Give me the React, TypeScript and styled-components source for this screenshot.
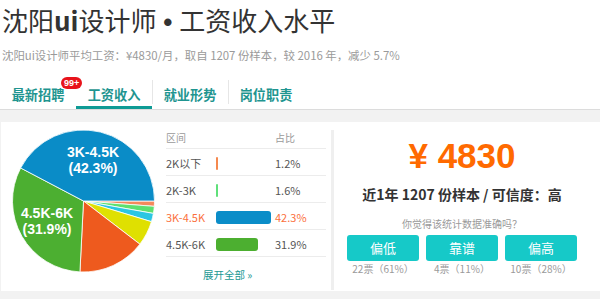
import React from "react";
import styled, { createGlobalStyle } from "styled-components";

const Global = createGlobalStyle`
  html, body { margin: 0; padding: 0; background: #fff; }
  body { font-family: "Noto Sans CJK SC", "Liberation Sans", sans-serif; width: 600px; height: 299px; overflow: hidden; }
  * { box-sizing: border-box; }
`;

const Page = styled.div`
  width: 600px;
  height: 299px;
  display: flex;
  flex-direction: column;
`;

const Header = styled.div`
  padding: 0 0 0 2px;
  height: 72px;
`;

const Title = styled.h1`
  margin: 0;
  height: 40px;
  line-height: 40px;
  font-size: 26px;
  font-weight: 400;
  color: #333;
  white-space: nowrap;
  b { font-weight: 700; }
`;

const Dot = styled.span`
  font-family: "Liberation Sans", sans-serif;
  font-weight: 700;
  padding: 0 1px;
`;

const Sub = styled.div`
  margin-top: 7px;
  font-size: 11.4px;
  line-height: 16px;
  color: #9a9a9a;
  white-space: nowrap;
`;

const Tabs = styled.div`
  display: flex;
  height: 37px;
`;

const Tab = styled.div<{ $active?: boolean; $sep?: boolean }>`
  position: relative;
  width: 76px;
  text-align: center;
  padding-top: 14px;
  line-height: 18px;
  font-size: 13.2px;
  font-weight: 700;
  color: #1f9590;
  border-bottom: 3px solid ${(p) => (p.$active ? "#0e9b95" : "transparent")};
  &::before {
    content: "";
    display: ${(p) => (p.$sep ? "block" : "none")};
    position: absolute;
    left: 0;
    top: 8px;
    height: 24px;
    width: 1px;
    background: #e6e6e6;
  }
`;

const Badge = styled.span`
  position: absolute;
  left: 61px;
  top: 5px;
  height: 12px;
  padding: 0 3px;
  border-radius: 6px;
  background: #e8131b;
  color: #fff;
  font-family: "Liberation Sans", sans-serif;
  font-size: 9px;
  font-weight: 700;
  line-height: 12px;
`;

const Body = styled.div`
  flex: 1;
  background: #f2f2f2;
  border-top: 1px solid #dcdcdc;
  padding: 12px 0 0 1px;
`;

const Card = styled.div`
  background: #fff;
  height: 169px;
  display: flex;
`;

const PieBox = styled.div`
  width: 165px;
  flex: none;
  position: relative;
`;

const PieLabel = styled.div<{ $x: number; $y: number }>`
  position: absolute;
  left: ${(p) => p.$x}px;
  top: ${(p) => p.$y}px;
  transform: translateX(-50%);
  text-align: center;
  color: #fff;
  font-family: "Liberation Sans", sans-serif;
  font-weight: 700;
  font-size: 14px;
  line-height: 16px;
  white-space: nowrap;
`;

const TableBox = styled.div`
  width: 160px;
  flex: none;
  padding-top: 4px;
  display: flex;
  flex-direction: column;
`;

const Row = styled.div<{ $head?: boolean; $hl?: boolean }>`
  display: grid;
  grid-template-columns: 50px 59px 1fr;
  align-items: center;
  height: ${(p) => (p.$head ? "23px" : "27px")};
  padding-top: ${(p) => (p.$head ? "0" : "2px")};
  border-bottom: 1px solid #ececec;
  font-size: ${(p) => (p.$head ? "10px" : "11px")};
  color: ${(p) => (p.$head ? "#9a9a9a" : p.$hl ? "#fb6f3c" : "#555")};
  white-space: nowrap;
`;

const Bar = styled.div<{ $color: string }>`
  height: 13px;
  background: ${(p) => p.$color};
  border-radius: 3px;
`;

const More = styled.div`
  padding-left: 37px;
  margin-top: 11px;
  font-size: 10.5px;
  line-height: 14px;
  color: #229893;
`;

const Divider = styled.div`
  width: 3px;
  flex: none;
  margin: 8px 0 1px 5px;
  background: #efefef;
`;

const Right = styled.div`
  flex: 1;
  display: flex;
  flex-direction: column;
  align-items: center;
  padding-right: 10px;
`;

const Price = styled.div`
  margin-top: 14px;
  font-family: "Liberation Sans", sans-serif;
  font-size: 35px;
  font-weight: 700;
  line-height: 40px;
  color: #ff6a00;
`;

const Sample = styled.div`
  margin-top: 8px;
  font-size: 14px;
  font-weight: 700;
  line-height: 20px;
  color: #333;
  white-space: nowrap;
`;

const Ask = styled.div`
  margin-top: 13px;
  font-size: 10px;
  line-height: 14px;
  color: #9a9a9a;
`;

const Votes = styled.div`
  margin-top: 4px;
  display: flex;
  gap: 7px;
`;

const VoteCol = styled.div`
  width: 72px;
  display: flex;
  flex-direction: column;
  align-items: center;
`;

const VoteBtn = styled.div`
  width: 72px;
  height: 26px;
  border-radius: 3px;
  background: #16c9c8;
  color: #fff;
  font-size: 13px;
  line-height: 26px;
  text-align: center;
`;

const VoteCount = styled.div`
  margin-top: 1px;
  font-size: 10px;
  line-height: 14px;
  color: #9a9a9a;
  white-space: nowrap;
`;

const slices = [
  { v: 1.2, c: "#f5895c" },
  { v: 1.6, c: "#5ee06f" },
  { v: 1.9, c: "#2bc6e2" },
  { v: 5.7, c: "#dfe001" },
  { v: 15.4, c: "#ee5a1e" },
  { v: 31.9, c: "#4caf31" },
  { v: 42.3, c: "#0a8cc7" },
];

function Pie() {
  const cx = 82.5, cy = 79, r = 71;
  let acc = 0;
  const paths = slices.map((s, i) => {
    const a0 = (acc / 100) * Math.PI * 2;
    acc += s.v;
    const a1 = (acc / 100) * Math.PI * 2;
    const x0 = cx + r * Math.cos(a0), y0 = cy + r * Math.sin(a0);
    const x1 = cx + r * Math.cos(a1), y1 = cy + r * Math.sin(a1);
    const large = a1 - a0 > Math.PI ? 1 : 0;
    const d = `M${cx},${cy} L${x0},${y0} A${r},${r} 0 ${large} 1 ${x1},${y1} Z`;
    return <path key={i} d={d} fill={s.c} stroke="#fff" strokeWidth={0.8} strokeLinejoin="round" />;
  });
  return (
    <svg width="165" height="169" viewBox="0 0 165 169">
      {paths}
    </svg>
  );
}

const rows = [
  { name: "2K以下", pct: 1.2, color: "#f5894f" },
  { name: "2K-3K", pct: 1.6, color: "#5fe07a" },
  { name: "3K-4.5K", pct: 42.3, color: "#0b8dc8", hl: true },
  { name: "4.5K-6K", pct: 31.9, color: "#4caf30" },
];

export default function App() {
  return (
    <Page>
      <Global />
      <Header>
        <Title>
          沈阳<b>ui</b>设计师 <Dot>•</Dot> 工资收入水平
        </Title>
        <Sub>沈阳ui设计师平均工资：¥4830/月，取自 1207 份样本，较 2016 年，减少 5.7%</Sub>
      </Header>
      <Tabs>
        <Tab>
          最新招聘
          <Badge>99+</Badge>
        </Tab>
        <Tab $active>工资收入</Tab>
        <Tab $sep>就业形势</Tab>
        <Tab $sep>岗位职责</Tab>
      </Tabs>
      <Body>
        <Card>
          <PieBox>
            <Pie />
            <PieLabel $x={92} $y={22}>
              3K-4.5K
              <br />
              (42.3%)
            </PieLabel>
            <PieLabel $x={46} $y={83}>
              4.5K-6K
              <br />
              (31.9%)
            </PieLabel>
          </PieBox>
          <TableBox>
            <Row $head>
              <span>区间</span>
              <span />
              <span>占比</span>
            </Row>
            {rows.map((r) => (
              <Row key={r.name} $hl={r.hl}>
                <span>{r.name}</span>
                <Bar $color={r.color} style={{ width: `${Math.max(1.6, r.pct * 1.31)}px` }} />
                <span>{r.pct}%</span>
              </Row>
            ))}
            <More>展开全部 »</More>
          </TableBox>
          <Divider />
          <Right>
            <Price>¥ 4830</Price>
            <Sample>近1年 1207 份样本 / 可信度：高</Sample>
            <Ask>你觉得该统计数据准确吗？</Ask>
            <Votes>
              <VoteCol>
                <VoteBtn>偏低</VoteBtn>
                <VoteCount>22票（61%）</VoteCount>
              </VoteCol>
              <VoteCol>
                <VoteBtn>靠谱</VoteBtn>
                <VoteCount>4票（11%）</VoteCount>
              </VoteCol>
              <VoteCol>
                <VoteBtn>偏高</VoteBtn>
                <VoteCount>10票（28%）</VoteCount>
              </VoteCol>
            </Votes>
          </Right>
        </Card>
      </Body>
    </Page>
  );
}
